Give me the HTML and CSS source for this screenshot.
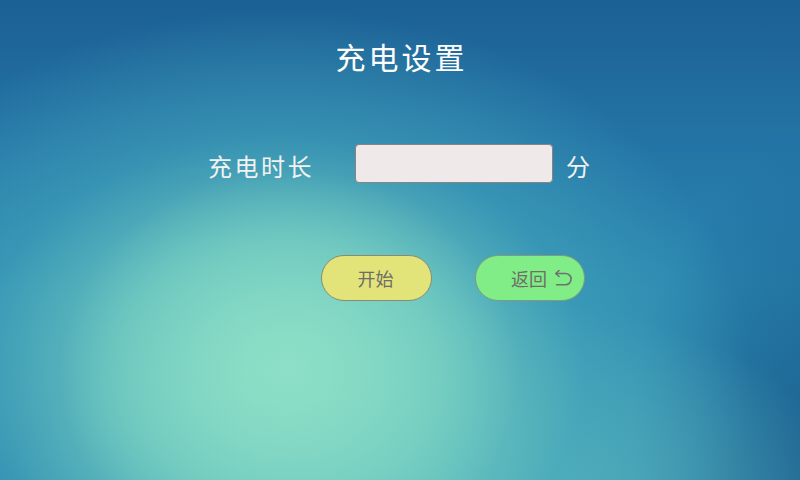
FILE: index.html
```html
<!DOCTYPE html>
<html lang="zh-CN">
<head>
<meta charset="utf-8">
<title>充电设置</title>
<link rel="stylesheet" href="styles.css">
</head>
<body>
<div class="screen">
  <h1 class="title">充电设置</h1>
  <div class="form-row">
    <span class="label">充电时长</span>
    <div class="input"></div>
    <span class="unit">分</span>
  </div>
  <div class="actions">
    <button class="btn btn-start">开始</button>
    <button class="btn btn-back">返回
      <svg class="back-icon" width="20" height="20" viewBox="0 0 20 20" fill="none" stroke="#707070" stroke-width="1.6" stroke-linecap="round" stroke-linejoin="round">
        <path d="M6 2.5 L2.8 5.5 L6 8.5"/>
        <path d="M3 5.5 H12.5 A5.6 5.6 0 0 1 12.5 16.7 H3.5"/>
      </svg>
    </button>
  </div>
</div>
</body>
</html>
```
FILE: styles.css
```css
html, body {
  margin: 0;
  padding: 0;
}
body {
  width: 800px;
  height: 480px;
  overflow: hidden;
  font-family: "Noto Sans CJK SC", "Noto Sans", sans-serif;
}
.screen {
  width: 800px;
  height: 480px;
  display: flex;
  flex-direction: column;
  background:
    radial-gradient(ellipse 230px 200px at 290px 370px, rgba(142, 224, 198, 0.9) 0%, rgba(142, 224, 198, 0) 100%),
    radial-gradient(ellipse 470px 360px at 280px 370px, rgba(130, 216, 196, 1) 0%, rgba(110, 202, 192, 0.85) 35%, rgba(70, 168, 188, 0.55) 65%, rgba(50, 140, 180, 0) 100%),
    radial-gradient(ellipse 420px 200px at 430px 490px, rgba(115, 208, 194, 0.85) 0%, rgba(115, 208, 194, 0) 100%),
    radial-gradient(ellipse 200px 320px at 830px 460px, rgba(20, 80, 130, 0.7) 0%, rgba(20, 80, 130, 0) 100%),
    linear-gradient(180deg, #1c6094 0%, #2374a6 30%, #2a86b0 60%, #2a82ac 100%);
}
.title {
  margin: 41px 0 0;
  font-size: 30px;
  line-height: 30px;
  font-weight: 400;
  color: #ffffff;
  text-align: center;
  letter-spacing: 3px;
  padding-left: 3px;
}
.form-row {
  margin-top: 73px;
  padding-left: 208px;
  display: flex;
  align-items: center;
  height: 39px;
}
.label {
  width: 147px;
  font-size: 24px;
  line-height: 24px;
  color: #f2f2f2;
  letter-spacing: 2.5px;
  margin-top: 4px;
}
.input {
  width: 196px;
  height: 37px;
  border: 1px solid #8c8282;
  border-radius: 4px;
  background: #efe9e9;
}
.unit {
  margin-left: 13px;
  font-size: 24px;
  line-height: 24px;
  color: #f2f2f2;
  margin-top: 4px;
}
.actions {
  margin-top: 72px;
  padding-left: 321px;
  display: flex;
  gap: 44px;
}
.btn {
  height: 46px;
  border: 1px solid #8a8a70;
  border-radius: 23px;
  font-family: inherit;
  font-size: 18px;
  line-height: 18px;
  color: #6e6e66;
  display: flex;
  align-items: center;
  padding: 0;
}
.btn-start {
  width: 111px;
  justify-content: center;
  background: #e2e47a;
  padding-right: 2px;
}
.btn-back {
  width: 110px;
  background: #80ed86;
  padding-left: 35px;
  border-color: #7f9a80;
  margin-left: -1px;
}
.back-icon {
  margin-left: 6px;
}
```
